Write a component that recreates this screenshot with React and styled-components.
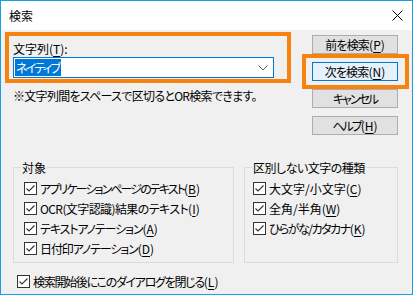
import React from "react";
import styled, { createGlobalStyle } from "styled-components";

const Global = createGlobalStyle`
  html, body { margin: 0; padding: 0; background: #ffffff; }
  body {
    font-family: "Noto Sans CJK JP", "Noto Sans", sans-serif;
    font-size: 12px;
    color: #000;
  }
  * { box-sizing: border-box; }
  u { text-decoration-thickness: 1px; text-underline-offset: 2px; }
`;

const Window = styled.div`
  position: relative;
  width: 413px;
  height: 295px;
  border: 1px solid #18a0e4;
  background: #f0f0f0;
  display: flex;
  flex-direction: column;
  overflow: hidden;
  font-feature-settings: "palt" 1;
`;

const TitleBar = styled.div`
  height: 29px;
  background: #ffffff;
  display: flex;
  align-items: center;
  justify-content: space-between;
  padding: 0 9px 0 8px;
  flex: none;
`;

const Title = styled.span`
  font-size: 12px;
  line-height: 15px;
`;

const CloseIcon = styled.svg`
  width: 11px;
  height: 11px;
  display: block;
`;

const Body = styled.div`
  padding: 5px 0 0 12px;
  display: flex;
  flex-direction: column;
`;

const TopRow = styled.div`
  display: flex;
  align-items: flex-start;
`;

const SearchArea = styled.div`
  width: 261px;
  padding-top: 6px;
  display: flex;
  flex-direction: column;
`;

const FieldLabel = styled.div`
  line-height: 15px;
  height: 15px;
`;

const Combo = styled.div`
  margin-top: 1px;
  height: 21px;
  border: 1px solid #0078d7;
  background: #ffffff;
  display: flex;
  align-items: center;
  justify-content: space-between;
  padding: 0 5px 0 1px;
`;

const Selected = styled.span`
  background: #0078d7;
  color: #ffffff;
  line-height: 17px;
  height: 17px;
  padding: 0 2px 0 1px;
  letter-spacing: -1.7px;
`;

const Chevron = styled.svg`
  width: 10px;
  height: 6px;
  display: block;
`;

const Note = styled.div`
  margin-top: 10px;
  line-height: 15px;
  white-space: nowrap;
  letter-spacing: -0.7px;
`;

const ButtonColumn = styled.div`
  margin-left: 38px;
  display: flex;
  flex-direction: column;
  gap: 8px;
`;

const Button = styled.div`
  width: 86px;
  height: 19px;
  border: 1px solid ${(p) => (p.$primary ? "#0078d7" : "#adadad")};
  background: ${(p) => (p.$primary ? "#e5f1fb" : "#e1e1e1")};
  display: flex;
  align-items: center;
  justify-content: center;
  line-height: 15px;
  white-space: nowrap;
  letter-spacing: ${(p) => p.$ls || 0}px;
`;

const Key = styled.span`
  letter-spacing: 0;
`;

const Groups = styled.div`
  margin-top: 25px;
  display: flex;
  gap: 10px;
`;

const Group = styled.fieldset`
  margin: 0;
  width: ${(p) => p.$width}px;
  height: 103px;
  border: 1px solid #dcdcdc;
  padding: 5px 0 0 ${(p) => p.$pad}px;
  display: flex;
  flex-direction: column;
  gap: 4px;
`;

const Legend = styled.legend`
  padding: 0 1px;
  margin-left: ${(p) => p.$shift}px;
  line-height: 15px;
  letter-spacing: ${(p) => p.$ls || 0}px;
`;

const CheckRow = styled.div`
  display: flex;
  align-items: center;
  gap: 3px;
  height: 16px;
  line-height: 15px;
  white-space: nowrap;
  margin-left: ${(p) => p.$indent || 0}px;
  margin-top: ${(p) => p.$top || 0}px;
`;

const CheckText = styled.span`
  letter-spacing: ${(p) => p.$ls || 0}px;
`;

const Box = styled.svg`
  width: 13px;
  height: 13px;
  display: block;
  flex: none;
`;

const HighlightSearch = styled.div`
  position: absolute;
  left: 4px;
  top: 31px;
  width: 286px;
  height: 51px;
  border: 4px solid #f7820f;
  pointer-events: none;
`;

const HighlightButton = styled.div`
  position: absolute;
  left: 301px;
  top: 53px;
  width: 107px;
  height: 35px;
  border: 4px solid #f7820f;
  pointer-events: none;
`;

function CheckBox() {
  return (
    <Box viewBox="0 0 13 13">
      <rect x="0.5" y="0.5" width="12" height="12" fill="#fff" stroke="#333" />
      <path d="M2.5 6.5 L5 9 L10.5 3.5" fill="none" stroke="#333" strokeWidth="1.1" />
    </Box>
  );
}

function Check({ children, k, indent, top, ls }) {
  return (
    <CheckRow $indent={indent} $top={top}>
      <CheckBox />
      <CheckText $ls={ls}>
        {children}
        <Key>
          (<u>{k}</u>)
        </Key>
      </CheckText>
    </CheckRow>
  );
}

export default function App() {
  return (
    <>
      <Global />
      <Window>
        <TitleBar>
          <Title>検索</Title>
          <CloseIcon viewBox="0 0 11 11">
            <path d="M0.5 0.5 L10.5 10.5 M10.5 0.5 L0.5 10.5" stroke="#000" strokeWidth="1" />
          </CloseIcon>
        </TitleBar>
        <Body>
          <TopRow>
            <SearchArea>
              <FieldLabel>
                文字列(<u>T</u>):
              </FieldLabel>
              <Combo>
                <Selected>ネイティブ</Selected>
                <Chevron viewBox="0 0 10 6">
                  <path d="M0.5 0.5 L5 5 L9.5 0.5" fill="none" stroke="#606060" strokeWidth="1" />
                </Chevron>
              </Combo>
              <Note>※文字列間をスペースで区切るとOR検索できます。</Note>
            </SearchArea>
            <ButtonColumn>
              <Button $ls={-0.8}>
                前を検索<Key>(<u>P</u>)</Key>
              </Button>
              <Button $primary $ls={-0.8}>
                次を検索<Key>(<u>N</u>)</Key>
              </Button>
              <Button $ls={-2}>キャンセル</Button>
              <Button $ls={-2}>
                ヘルプ<Key>(<u>H</u>)</Key>
              </Button>
            </ButtonColumn>
          </TopRow>
          <Groups>
            <Group $width={221} $pad={10}>
              <Legend $shift={-3}>対象</Legend>
              <Check k="B" ls={-1.9}>
                アプリケーションページのテキスト
              </Check>
              <Check k="I" ls={-0.6}>
                OCR(文字認識)結果のテキスト
              </Check>
              <Check k="A" ls={-1.1}>
                テキストアノテーション
              </Check>
              <Check k="D" ls={-1.1}>
                日付印アノテーション
              </Check>
            </Group>
            <Group $width={154} $pad={8}>
              <Legend $shift={-1} $ls={-0.5}>区別しない文字の種類</Legend>
              <Check k="C">大文字/小文字</Check>
              <Check k="W">全角/半角</Check>
              <Check k="K" ls={-1.5}>
                ひらがな/カタカナ
              </Check>
            </Group>
          </Groups>
          <Check k="L" indent={4} top={10} ls={-1.3}>
            検索開始後にこのダイアログを閉じる
          </Check>
        </Body>
        <HighlightSearch />
        <HighlightButton />
      </Window>
    </>
  );
}
